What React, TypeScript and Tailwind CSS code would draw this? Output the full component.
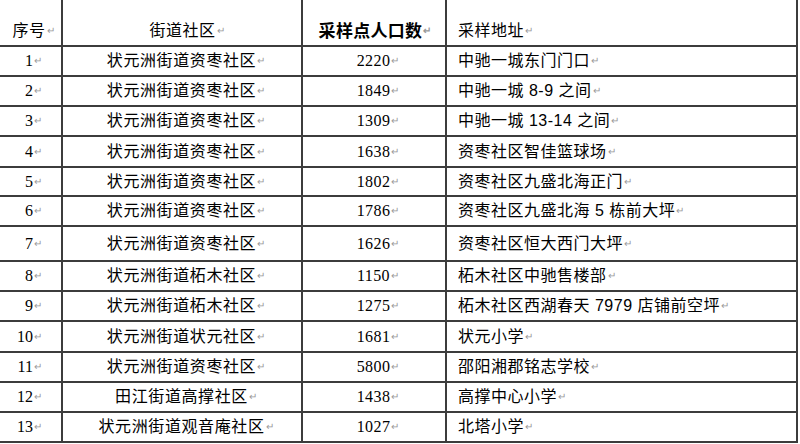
import React from 'react';

type Row = { no: number; street: string; count: number; place: string; h: string };

const rows: Row[] = [
  { no: 1, street: '状元洲街道资枣社区', count: 2220, place: '中驰一城东门门口', h: 'h-[30px]' },
  { no: 2, street: '状元洲街道资枣社区', count: 1849, place: '中驰一城 8-9 之间', h: 'h-[30px]' },
  { no: 3, street: '状元洲街道资枣社区', count: 1309, place: '中驰一城 13-14 之间', h: 'h-[30px]' },
  { no: 4, street: '状元洲街道资枣社区', count: 1638, place: '资枣社区智佳篮球场', h: 'h-[31px]' },
  { no: 5, street: '状元洲街道资枣社区', count: 1802, place: '资枣社区九盛北海正门', h: 'h-[29px]' },
  { no: 6, street: '状元洲街道资枣社区', count: 1786, place: '资枣社区九盛北海 5 栋前大坪', h: 'h-[30px]' },
  { no: 7, street: '状元洲街道资枣社区', count: 1626, place: '资枣社区恒大西门大坪', h: 'h-[35px]' },
  { no: 8, street: '状元洲街道柘木社区', count: 1150, place: '柘木社区中驰售楼部', h: 'h-[30px]' },
  { no: 9, street: '状元洲街道柘木社区', count: 1275, place: '柘木社区西湖春天 7979 店铺前空坪', h: 'h-[30px]' },
  { no: 10, street: '状元洲街道状元社区', count: 1681, place: '状元小学', h: 'h-[31px]' },
  { no: 11, street: '状元洲街道资枣社区', count: 5800, place: '邵阳湘郡铭志学校', h: 'h-[30px]' },
  { no: 12, street: '田江街道高撑社区', count: 1438, place: '高撑中心小学', h: 'h-[30px]' },
  { no: 13, street: '状元洲街道观音庵社区', count: 1027, place: '北塔小学', h: 'h-[30px]' },
];

// Word paragraph mark
function Mark() {
  return <span className="ml-[1px] text-[10px] leading-none tracking-normal text-[#9a9a9a]">↵</span>;
}

const line = 'border-r-2 border-b-2 border-[#3c3c3c]';
const serif = 'font-["Liberation_Serif","Noto_Sans_CJK_SC",serif]';
const sans = 'font-["Liberation_Sans","Noto_Sans_CJK_SC",sans-serif]';

export default function App() {
  return (
    <div className="w-[800px] h-[444px] bg-white text-black overflow-hidden">
      <div className={`w-[798px] ${serif} text-[16px] leading-none`}>
        {/* ── Header ── */}
        <div className="flex h-[47px]">
          <div className={`w-[63px] ${line} flex items-center justify-center pt-[17px] pl-[6px] tracking-[0.5px]`}>
            序号<Mark />
          </div>
          <div className={`w-[240px] ${line} flex items-center justify-center pt-[17px] pl-[10px] tracking-[0.5px]`}>
            街道社区<Mark />
          </div>
          <div className={`w-[144px] ${line} flex items-center justify-center pt-[17px] pl-[2px] font-bold text-[17px] tracking-[0.3px]`}>
            采样点人口数<Mark />
          </div>
          <div className={`w-[351px] ${line} flex items-center pl-[11px] pt-[17px] tracking-[0.5px]`}>
            采样地址<Mark />
          </div>
        </div>

        {/* ── Body ── */}
        {rows.map((r) => (
          <div key={r.no} className={`flex ${r.h}`}>
            <div className={`w-[63px] ${line} flex items-center justify-end pr-[19px]`}>
              {r.no}
              <Mark />
            </div>
            <div className={`w-[240px] ${line} flex items-center justify-center pl-[8px] tracking-[0.6px]`}>
              {r.street}
              <Mark />
            </div>
            <div className={`w-[144px] ${line} flex items-center justify-center pl-[8px] tracking-[0.4px]`}>
              {r.count}
              <Mark />
            </div>
            <div className={`w-[351px] ${line} ${sans} flex items-center pl-[11px] tracking-[0.5px]`}>
              {r.place}
              <Mark />
            </div>
          </div>
        ))}
      </div>
    </div>
  );
}
